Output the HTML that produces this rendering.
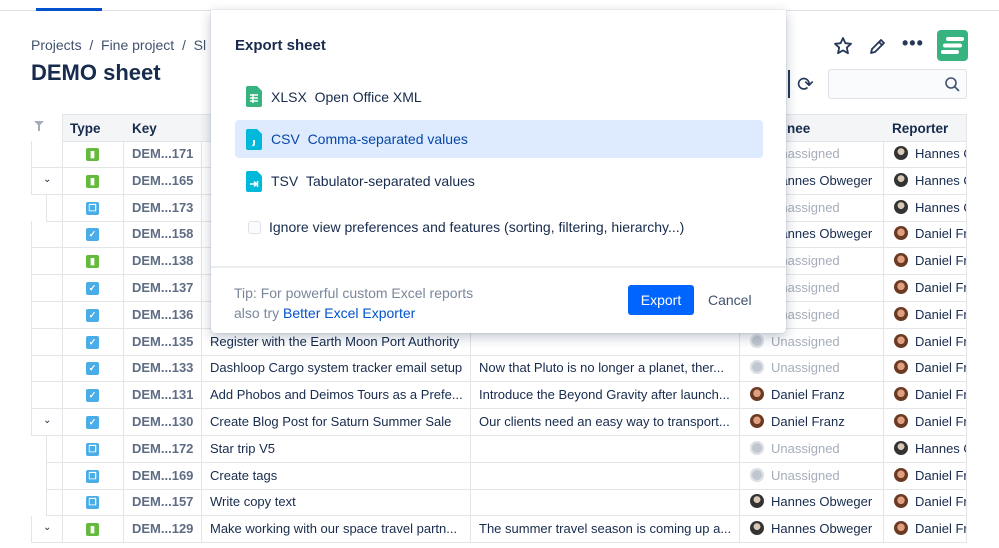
<!DOCTYPE html>
<html><head><style>
*{box-sizing:border-box;margin:0;padding:0}
body{width:999px;height:548px;overflow:hidden;background:#fff;font-family:"Liberation Sans",sans-serif;color:#172b4d;position:relative;font-size:13px}
.a{position:absolute}
.cell{position:absolute;height:27px;border-bottom:1px solid #e3e5e9;border-right:1px solid #e3e5e9;line-height:26px;padding-left:8px;white-space:nowrap;overflow:hidden}
.key{color:#5e6c84;font-weight:bold}
.ic{position:absolute;width:13px;height:13px;border-radius:2px;color:#fff;font-size:9px;line-height:13px;text-align:center;font-weight:bold}
.story{background:#63ba3c}.task{background:#4bade8}.sub{background:#4bade8}
.un{color:#a5adba}
.av{display:inline-block;width:14px;height:14px;border-radius:50%;vertical-align:-2px;margin-right:7px}
.avh{background:radial-gradient(circle at 50% 40%,#d9c8b8 30%,#333 32%)}
.avd{background:radial-gradient(circle at 50% 45%,#e0a080 35%,#6b3a22 37%)}
.avu{background:#c1c7d0;box-shadow:inset 0 0 0 2px #dfe1e6}
.chev{position:absolute;left:43px;font-size:10px;color:#172b4d}
</style></head><body>
<div class="a" style="left:0;top:10px;width:999px;height:1px;background:#dfe1e6"></div>
<div class="a" style="left:36px;top:8px;width:66px;height:3px;background:#0052cc"></div>
<div class="a" style="left:31px;top:37px;font-size:14px;color:#42526e">Projects &nbsp;/&nbsp; Fine project &nbsp;/&nbsp; Sl</div>
<div class="a" style="left:31px;top:60px;font-size:22px;font-weight:bold">DEMO sheet</div>
<svg class="a" style="left:833px;top:36px" width="20" height="20" viewBox="0 0 20 20"><path d="M10 2l2.4 5.2 5.6.6-4.2 3.8 1.2 5.6L10 14.4 5 17.2l1.2-5.6L2 7.8l5.6-.6z" fill="none" stroke="#253858" stroke-width="1.8" stroke-linejoin="round"/></svg>
<svg class="a" style="left:868px;top:36px" width="20" height="20" viewBox="0 0 20 20"><path d="M3 17l1-4L13 4l3 3-9 9zM11 6l3 3" fill="none" stroke="#253858" stroke-width="1.8" stroke-linejoin="round"/></svg>
<div class="a" style="left:902px;top:33px;font-size:18px;font-weight:bold;color:#253858;letter-spacing:1px">•••</div>
<div class="a" style="left:937px;top:30px;width:31px;height:31px;background:#36b37e;border-radius:4px"></div>
<svg class="a" style="left:937px;top:30px" width="31" height="31"><path d="M11 9h14M8 15.5h15M6 22h14" stroke="#fff" stroke-width="4" stroke-linecap="round"/></svg>
<div class="a" style="left:788px;top:70px;width:2px;height:28px;background:#253858"></div>
<div class="a" style="left:797px;top:72px;font-size:20px;color:#253858">⟳</div>
<div class="a" style="left:828px;top:69px;width:139px;height:30px;border:1px solid #dfe1e6;border-radius:3px;background:#fafbfc"></div>
<svg class="a" style="left:944px;top:76px" width="16" height="16"><circle cx="7" cy="7" r="5" fill="none" stroke="#42526e" stroke-width="1.6"/><path d="M11 11l4 4" stroke="#42526e" stroke-width="1.6"/></svg>
<svg class="a" style="left:33px;top:120px" width="12" height="12"><path d="M1 1h10L7 5v6H5V5z" fill="#a5adba"/></svg>
<div class="a" style="left:62px;top:114px;width:905px;height:28px;background:#f4f5f7;border:1px solid #e3e5e9"></div>
<div class="a" style="left:70px;top:121px;font-weight:bold;font-size:13.5px">Type</div>
<div class="a" style="left:132px;top:121px;font-weight:bold;font-size:13.5px">Key</div>
<div class="a" style="left:787px;top:121px;font-weight:bold;font-size:13.5px">nee</div>
<div class="a" style="left:892px;top:121px;font-weight:bold;font-size:13.5px">Reporter</div>
<div id="rows"></div>
<script>
var R=[["171","story","","","u","h",0,0],["165","story","","","Hannes Obweger","h",1,0],["173","sub","","","u","h",0,1],["158","task","","","Hannes Obweger","d",0,0],["138","story","","","u","d",0,0],["137","task","","","u","d",0,0],["136","task","","","u","d",0,0],
["135","task","Register with the Earth Moon Port Authority","","u","d",0,0],["133","task","Dashloop Cargo system tracker email setup","Now that Pluto is no longer a planet, ther...","u","d",0,0],["131","task","Add Phobos and Deimos Tours as a Prefe...","Introduce the Beyond Gravity after launch...","Daniel Franz","d",0,0],["130","task","Create Blog Post for Saturn Summer Sale","Our clients need an easy way to transport...","Daniel Franz","d",1,0],["172","sub","Star trip V5","","u","h",0,1],["169","sub","Create tags","","u","d",0,1],["157","sub","Write copy text","","Hannes Obweger","d",0,1],["129","story","Make working with our space travel partn...","The summer travel season is coming up a...","Hannes Obweger","d",1,0]];
var G={story:"▮",task:"✓",sub:"❐"};
var h="";R.forEach(function(r,i){var y=Math.round(141+i*26.8);var gl=r[7]?46:31;
h+='<div class="cell" style="left:'+gl+'px;top:'+y+'px;width:'+(63-gl)+'px;border-left:1px solid #e3e5e9"></div>';
if(r[6])h+='<div class="chev" style="top:'+(y+6)+'px">⌄</div>';
h+='<div class="cell" style="left:62px;top:'+y+'px;width:62px"></div><div class="ic '+r[1]+'" style="left:86px;top:'+(y+7)+'px">'+G[r[1]]+'</div>';
h+='<div class="cell key" style="left:124px;top:'+y+'px;width:78px">DEM...'+r[0]+'</div>';
h+='<div class="cell" style="left:202px;top:'+y+'px;width:269px">'+r[2]+'</div>';
h+='<div class="cell" style="left:471px;top:'+y+'px;width:269px">'+r[3]+'</div>';
var a=r[4]=="u"?'<span class="av avu"></span><span class="un">Unassigned</span>':'<span class="av '+(r[4][0]=="H"?"avh":"avd")+'"></span>'+r[4];
h+='<div class="cell" style="left:740px;top:'+y+'px;width:144px;padding-left:10px">'+a+'</div>';
h+='<div class="cell" style="left:884px;top:'+y+'px;width:83px;padding-left:10px"><span class="av '+(r[5]=="h"?"avh":"avd")+'"></span>'+(r[5]=="h"?"Hannes Obweger":"Daniel Franz")+'</div>';});
document.getElementById("rows").innerHTML=h;
</script>
<div class="a" style="left:211px;top:10px;width:575px;height:323px;background:#fff;border-radius:0 0 4px 4px;box-shadow:0 4px 12px rgba(9,30,66,.25),0 0 1px rgba(9,30,66,.3)">
<div class="a" style="left:24px;top:27px;font-size:15px;font-weight:bold">Export sheet</div>
<svg class="a" style="left:35px;top:76px" width="16" height="21"><path d="M0 2a2 2 0 012-2h9l5 5v14a2 2 0 01-2 2H2a2 2 0 01-2-2z" fill="#36b37e"/><path d="M4 9h8M4 12h8M4 15h8M7 8v9" stroke="#fff" stroke-width="1.4"/></svg>
<div class="a" style="left:60px;top:79px;font-size:14px">XLSX &nbsp;Open Office XML</div>
<div class="a" style="left:24px;top:110px;width:528px;height:38px;background:#deebff;border-radius:4px"></div>
<svg class="a" style="left:35px;top:119px" width="16" height="21"><path d="M0 2a2 2 0 012-2h9l5 5v14a2 2 0 01-2 2H2a2 2 0 01-2-2z" fill="#00b8d9"/><path d="M8 11v4l-1 2" stroke="#fff" stroke-width="2"/></svg>
<div class="a" style="left:60px;top:121px;font-size:14px;color:#0747a6">CSV &nbsp;Comma-separated values</div>
<svg class="a" style="left:35px;top:161px" width="16" height="21"><path d="M0 2a2 2 0 012-2h9l5 5v14a2 2 0 01-2 2H2a2 2 0 01-2-2z" fill="#00b8d9"/><path d="M4 13h6M8 10.5l2.5 2.5L8 15.5M11.5 10v6" stroke="#fff" stroke-width="1.5" fill="none"/></svg>
<div class="a" style="left:60px;top:163px;font-size:14px">TSV &nbsp;Tabulator-separated values</div>
<div class="a" style="left:37px;top:211px;width:13px;height:13px;border:1.5px solid #dfe1e6;border-radius:3px;background:#fafbfc"></div>
<div class="a" style="left:58px;top:209px;font-size:14px">Ignore view preferences and features (sorting, filtering, hierarchy...)</div>
<div class="a" style="left:0;top:256px;width:575px;height:2px;background:#ebecf0"></div>
<div class="a" style="left:23px;top:273px;font-size:14px;color:#7a869a;line-height:20px">Tip: For powerful custom Excel reports<br>also try <span style="color:#0052cc">Better Excel Exporter</span></div>
<div class="a" style="left:417px;top:275px;width:66px;height:30px;background:#0065ff;border-radius:3px;color:#fff;font-size:14px;text-align:center;line-height:30px">Export</div>
<div class="a" style="left:497px;top:282px;font-size:14px;color:#42526e">Cancel</div>
</div>
</body></html>
